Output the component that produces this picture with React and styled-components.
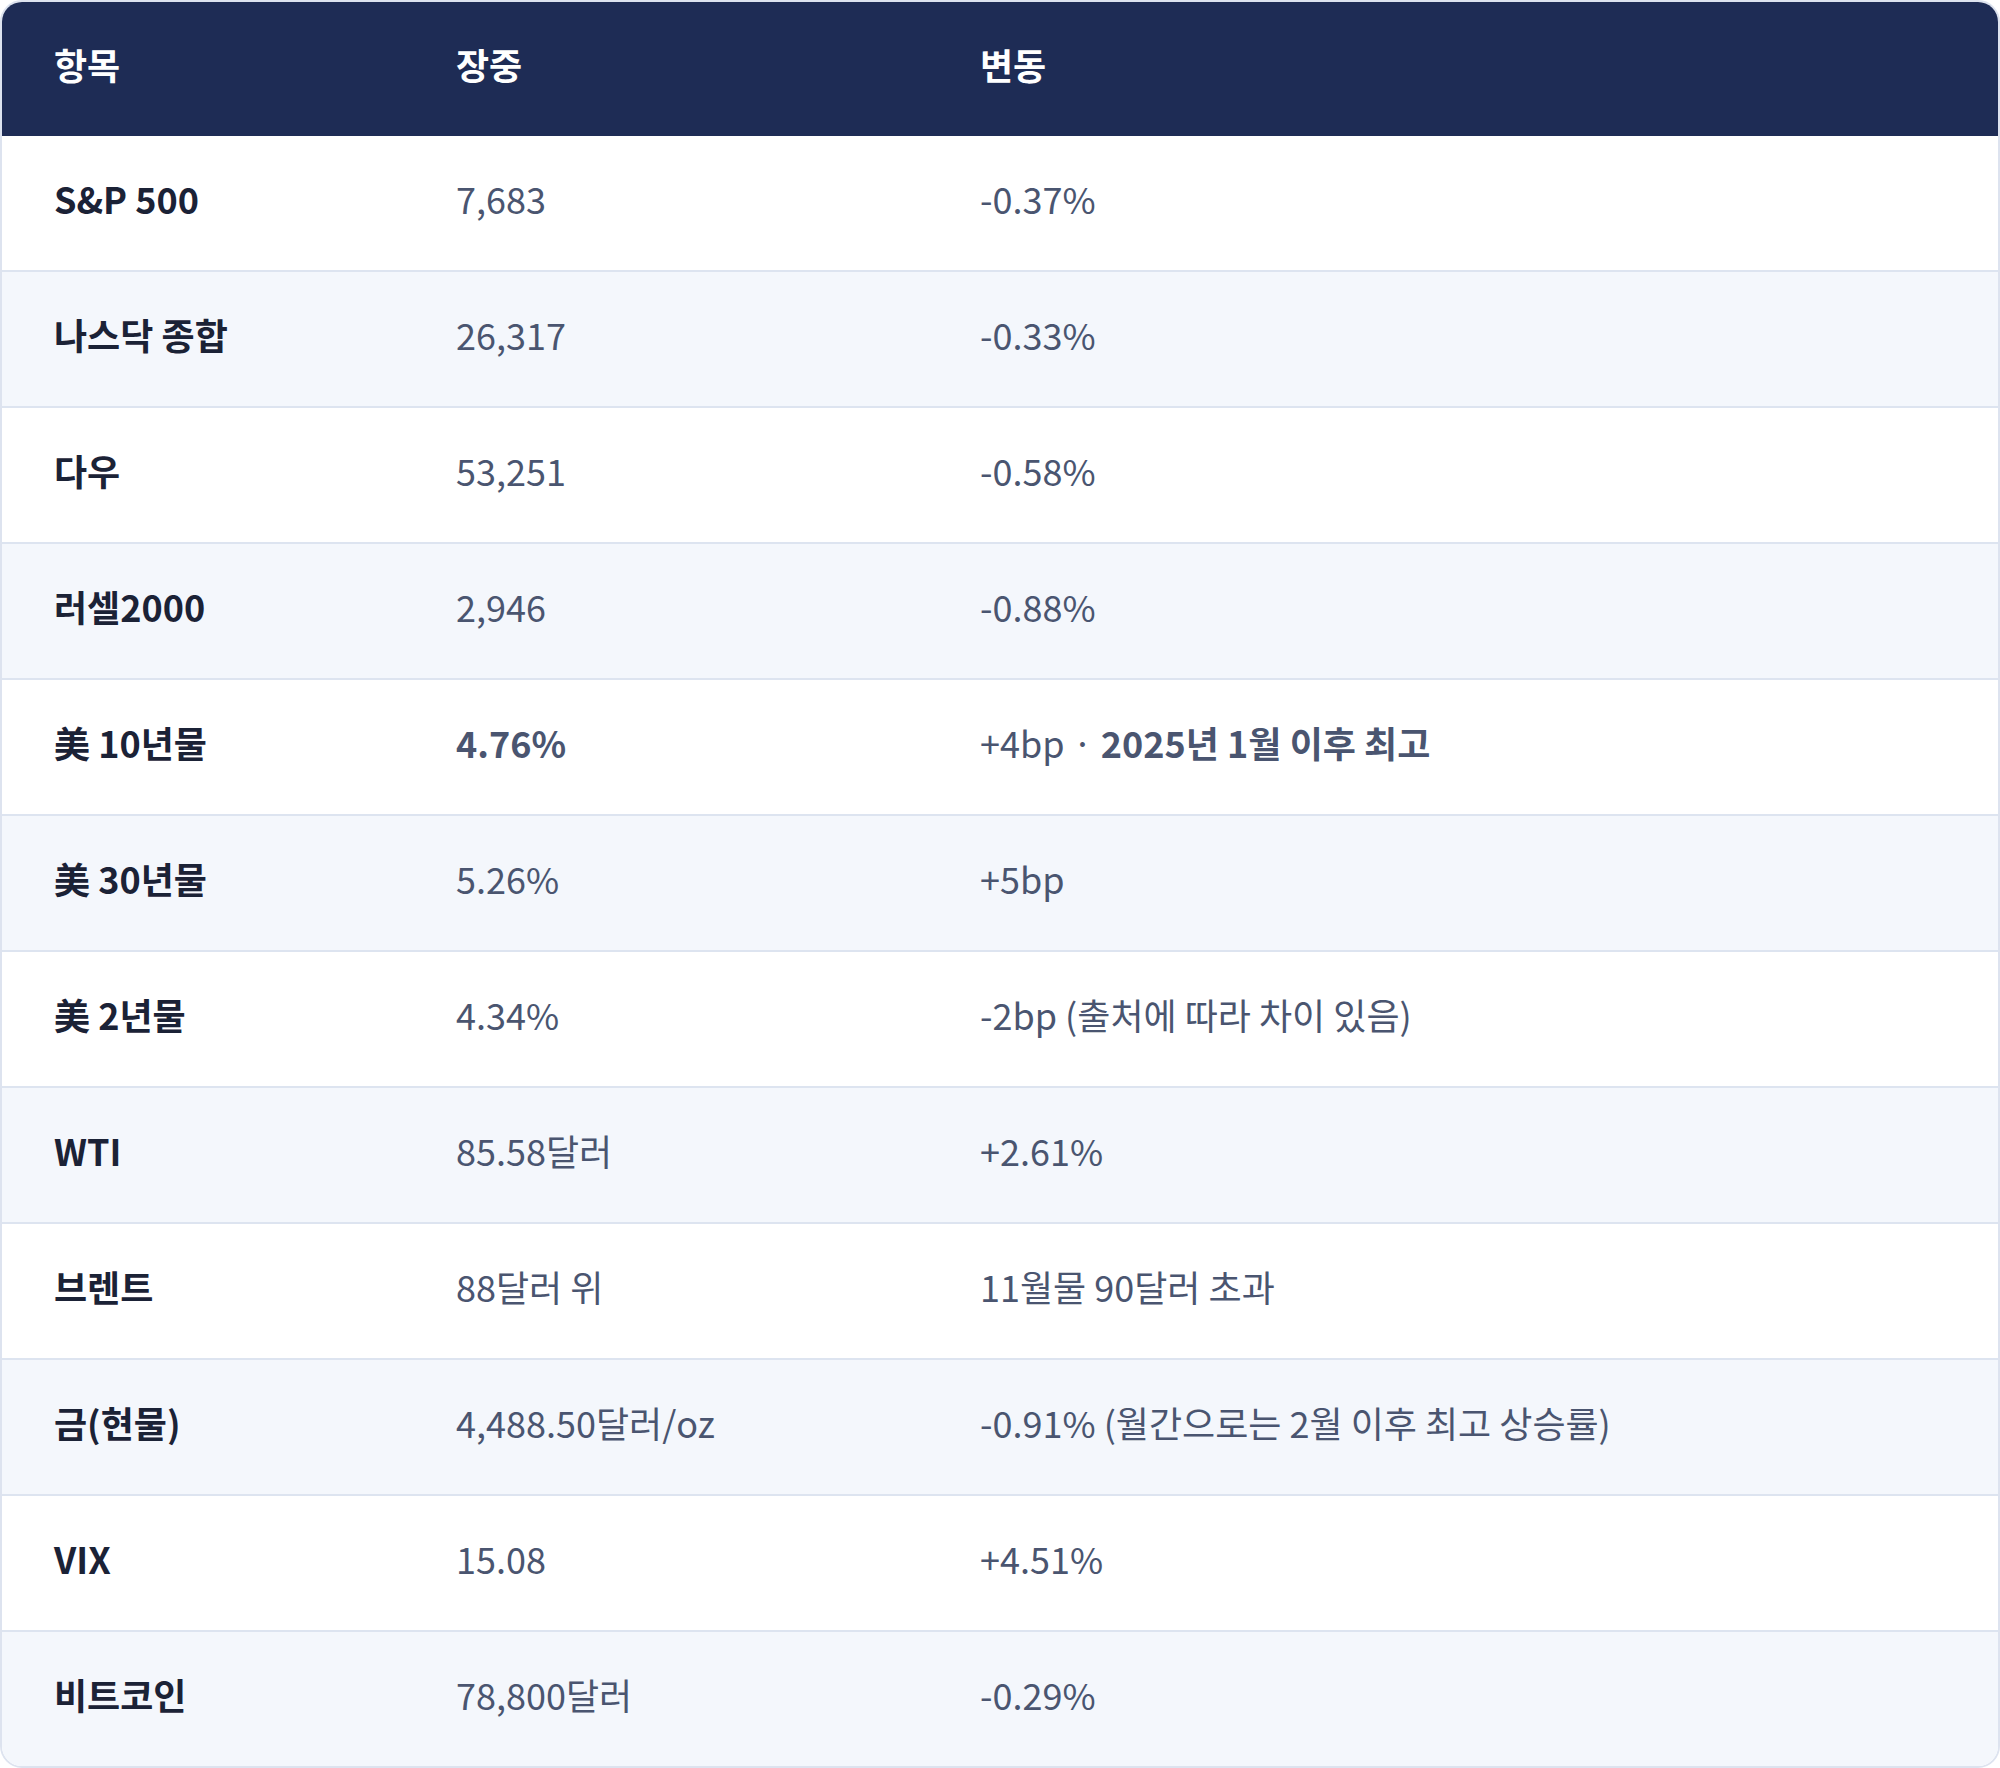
import React from "react";
import styled, { createGlobalStyle } from "styled-components";

const Global = createGlobalStyle`
  html, body { margin: 0; padding: 0; background: #ffffff; }
  body { font-family: "Noto Sans CJK KR", "Noto Sans", sans-serif; }
  * { box-sizing: border-box; }
`;

const Card = styled.div`
  width: 2000px;
  border: 2px solid #dde3ef;
  border-radius: 22px;
  overflow: hidden;
  background: #ffffff;
`;

const Row = styled.div`
  display: grid;
  grid-template-columns: 402px 524px 1fr;
  align-items: center;
  height: ${(p) => (p.$last || p.$header ? "134px" : "136px")};
  background: ${(p) => (p.$header ? "#1e2c55" : p.$alt ? "#f4f7fc" : "#ffffff")};
  border-bottom: ${(p) => (p.$last || p.$header ? "none" : "2px solid #dde4f0")};
`;

const Cell = styled.div`
  padding-left: 52px;
  padding-bottom: 8px;
  font-size: 36px;
  line-height: 1.2;
  white-space: nowrap;
  letter-spacing: 0;
  color: ${(p) => (p.$head ? "#ffffff" : p.$label ? "#1b2236" : "#4a5570")};
  font-weight: ${(p) => (p.$head || p.$label || p.$bold ? 700 : 400)};
`;

const Strong = styled.span`
  font-weight: 700;
`;

const rows = [
  ["S&P 500", "7,683", "-0.37%"],
  ["나스닥 종합", "26,317", "-0.33%"],
  ["다우", "53,251", "-0.58%"],
  ["러셀2000", "2,946", "-0.88%"],
  ["美 10년물", "4.76%", "highlight", true],
  ["美 30년물", "5.26%", "+5bp"],
  ["美 2년물", "4.34%", "-2bp (출처에 따라 차이 있음)"],
  ["WTI", "85.58달러", "+2.61%"],
  ["브렌트", "88달러 위", "11월물 90달러 초과"],
  ["금(현물)", "4,488.50달러/oz", "-0.91% (월간으로는 2월 이후 최고 상승률)"],
  ["VIX", "15.08", "+4.51%"],
  ["비트코인", "78,800달러", "-0.29%"],
];

export default function App() {
  return (
    <>
      <Global />
      <Card>
        <Row $header>
          <Cell $head>항목</Cell>
          <Cell $head>장중</Cell>
          <Cell $head>변동</Cell>
        </Row>
        {rows.map(([label, value, change, bold], i) => (
          <Row key={label} $alt={i % 2 === 1} $last={i === rows.length - 1}>
            <Cell $label>{label}</Cell>
            <Cell $bold={bold}>{value}</Cell>
            <Cell>
              {change === "highlight" ? (
                <>
                  +4bp · <Strong>2025년 1월 이후 최고</Strong>
                </>
              ) : (
                change
              )}
            </Cell>
          </Row>
        ))}
      </Card>
    </>
  );
}
